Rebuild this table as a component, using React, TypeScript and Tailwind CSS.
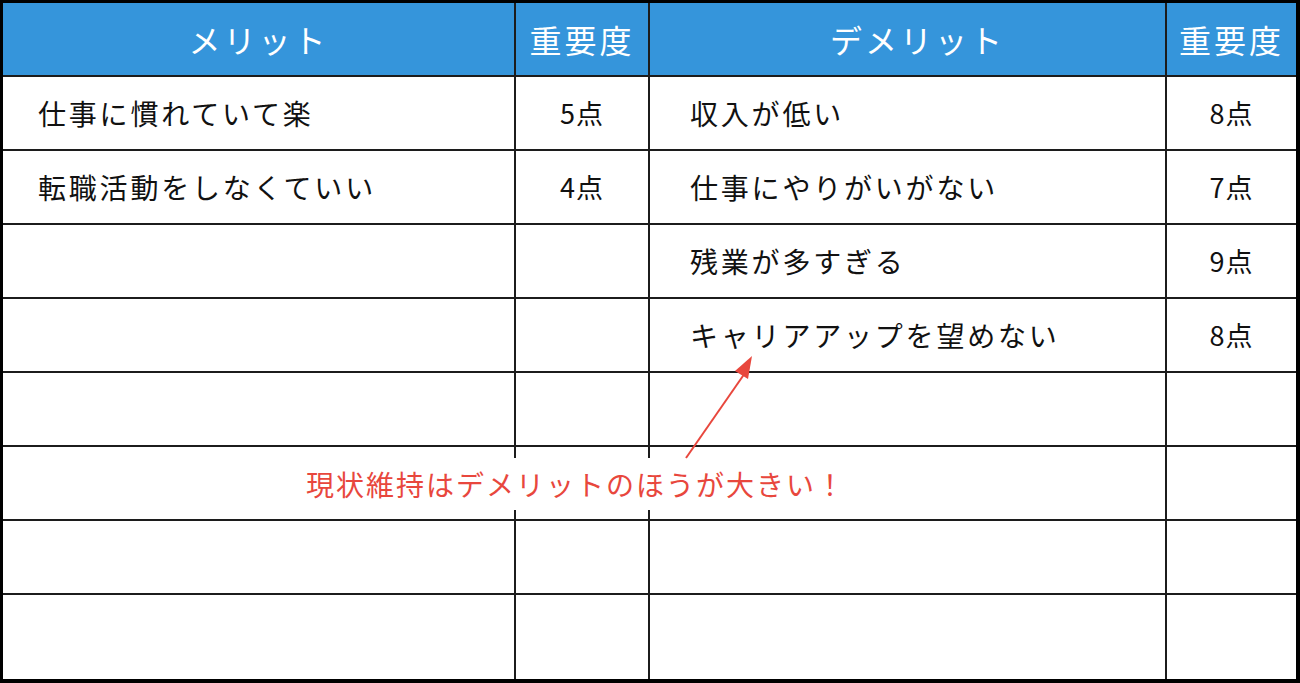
import React from 'react';

const merits = [
  { text: '仕事に慣れていて楽', score: '5点' },
  { text: '転職活動をしなくていい', score: '4点' },
];

const demerits = [
  { text: '収入が低い', score: '8点' },
  { text: '仕事にやりがいがない', score: '7点' },
  { text: '残業が多すぎる', score: '9点' },
  { text: 'キャリアアップを望めない', score: '8点' },
];

const font = { fontFamily: '"Noto Sans CJK JP", "Noto Sans", sans-serif' };

const Row: React.FC<{ index: number; last?: boolean }> = ({ index, last }) => {
  const m = merits[index];
  const d = demerits[index];
  return (
    <div
      className={`flex ${last ? 'flex-1' : 'h-[74px] border-b-2 border-[#1c1c1c]'}`}
    >
      <div className="w-[513px] border-r-2 border-[#1c1c1c] flex items-center pl-[35px] text-[28px] tracking-[2.8px] text-[#111]">
        {m?.text}
      </div>
      <div className="w-[134px] border-r-2 border-[#1c1c1c] flex items-center justify-center text-[27px] tracking-[1px] text-[#111]">
        {m?.score}
      </div>
      <div className="w-[517px] border-r-2 border-[#1c1c1c] flex items-center pl-[40px] text-[28px] tracking-[2.8px] text-[#111]">
        {d?.text}
      </div>
      <div className="flex-1 flex items-center justify-center text-[27px] tracking-[1px] text-[#111]">
        {d?.score}
      </div>
    </div>
  );
};

export default function App() {
  return (
    <div
      className="relative w-[1300px] h-[683px] bg-white border-l-[3px] border-t-[3px] border-r-[4px] border-b-[4px] border-black flex flex-col overflow-hidden"
      style={font}
    >
      {/* header */}
      <div className="flex h-[74px] bg-[#3595db] text-white text-[32px] tracking-[3px] border-b-2 border-[#1c1c1c]">
        <div className="w-[513px] border-r-2 border-[#1c1c1c] flex items-center justify-center">メリット</div>
        <div className="w-[134px] border-r-2 border-[#1c1c1c] flex items-center justify-center">重要度</div>
        <div className="w-[517px] border-r-2 border-[#1c1c1c] flex items-center justify-center pl-[20px]">デメリット</div>
        <div className="flex-1 flex items-center justify-center">重要度</div>
      </div>

      {[0, 1, 2, 3, 4, 5, 6].map((i) => (
        <Row key={i} index={i} />
      ))}
      <Row index={7} last />

      {/* annotation */}
      <div className="absolute left-[297px] top-[455px] w-[552px] h-[52px] bg-white flex items-center justify-center text-[28px] tracking-[2px] text-[#e8473d]">
        現状維持はデメリットのほうが大きい！
      </div>
      <svg
        className="absolute left-0 top-0"
        width="1300"
        height="683"
        viewBox="0 0 1300 683"
      >
        <line x1="683" y1="455" x2="742" y2="370" stroke="#e8473d" strokeWidth="2" />
        <polygon points="749,353 732,368 745,376" fill="#e8473d" />
      </svg>
    </div>
  );
}
